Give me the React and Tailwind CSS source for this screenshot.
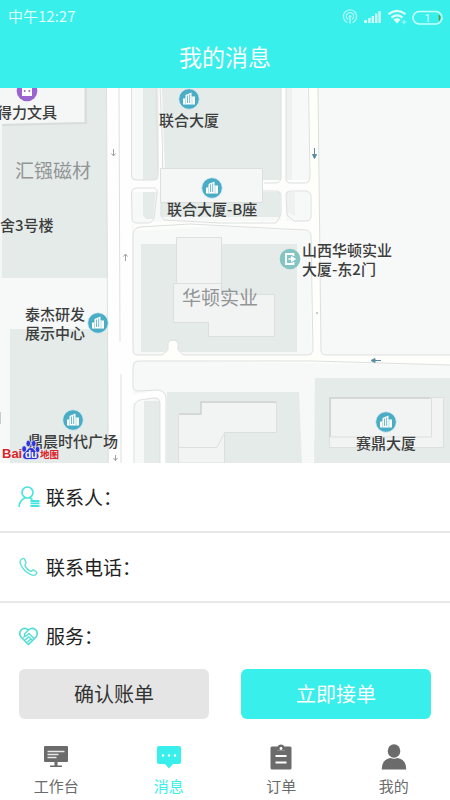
import React from "react";

const CYAN = "#38efeb";

function StatusIcons() {
  return (
    <svg width="102" height="18" viewBox="342 6 102 18" fill="none" aria-label="系统状态">
      <g stroke="#a9f8f5" strokeWidth="1.3" strokeLinecap="round">
        <path d="M347 21.300A6.600 6.600 0 1 1 353 21.300" />
        <path d="M347.800 18.200A3.700 3.700 0 1 1 352.200 18.200" />
        <path d="M350 17v5" strokeWidth="1.600" />
      </g>
      <circle cx="350" cy="15.500" r="1.500" fill="#a9f8f5" />
      <g fill="#d2fcfa">
        <rect x="364" y="19" width="3.200" height="3" rx="1" />
        <rect x="368.200" y="17" width="2.400" height="5" />
        <rect x="371.600" y="15" width="2.400" height="7" />
        <rect x="375" y="12.500" width="2.400" height="9.500" />
        <rect x="378.400" y="10" width="2.400" height="12" />
      </g>
      <g stroke="#e2fefc" strokeWidth="2.200">
        <path d="M388.500 13.200Q397 6.600 405.500 13.200" />
        <path d="M391.500 16.600Q397 12.200 402.500 16.600" />
      </g>
      <path d="M397 22.500l-3.600-4Q397 15.800 400.600 18.500z" fill="#e2fefc" />
      <path d="M401.500 21h5M404 18.700v4.600" stroke="#a5f8f5" strokeWidth="1.200" />
      <rect x="413" y="10.500" width="29" height="12.500" rx="6.200" stroke="#c9fffb" strokeWidth="1.600" />
      <path d="M439 14v5.500a4 4 0 0 0 0-5.500z" fill="#4a9c2c" stroke="#4a9c2c" strokeWidth="0.600" />
      <text x="427.500" y="20.500" fontSize="11" textAnchor="middle" fill="#dcfffd" fontFamily="Roboto, sans-serif">1</text>
    </svg>
  );
}

function MapDrawing() {
  return (
    <svg
      className="block h-full w-full"
      viewBox="0 88 450 375"
      preserveAspectRatio="xMidYMid slice"
      aria-hidden="true"
    >
      <rect x="0" y="88" width="450" height="375" fill="#f7f8f8" />

      {/* plots */}
      <g fill="#e5ebe9">
        <path d="M0 88H106L108 278H0z" />
        <path d="M10 329H108L109 463H10z" />
        <path d="M143 88H158L159 176L157 180H143z" />
        <path d="M162 88H281V182H165V170z" />
        <path d="M143 189H156L153 219H146L143 215z" />
        <path d="M161 192H280V217H161z" />
        <path d="M141 244H297V352H141z" />
        <path d="M144 401H160V463H144z" />
        <path d="M167 392H299L302 463H167z" />
        <path d="M315 378H450V463H314z" />
      </g>
      <path d="M286 88H292V183H286zM287 192H295V216L287 212z" fill="#eff1f1" />
      <path d="M0 88H84V122L2 124V278H0z" fill="#f5f6f6" />
      <path d="M2 125L86 123V88" fill="none" stroke="#d9dddc" strokeWidth="2" />

      {/* roads */}
      <path d="M107 88H131L134 463H109z" fill="#fefefe" />
      <path d="M308 88H318L321 355H312z" fill="#fefefb" />
      <path d="M132 355H450V365L132 361z" fill="#fefefb" />
      <path d="M131 180H310V192H131z" fill="#fcfdfc" />
      <path d="M133 223L165 221L311 221V232L220 226L134 231z" fill="#fdfdfc" />
      <path d="M160 88L163 170V182H157L159 168V88zM281 88H286V221H281z" fill="#fdfdfc" />
      <path d="M133 395L158 390Q165 391 166 399V463H160V400Q160 397 155 397L134 403z" fill="#fff" />
      <path d="M162 355L168 349V343Q173 337 178 343V349L183 355z" fill="#fefefb" />

      {/* kerbs */}
      <g fill="none" stroke="#dde0de" strokeWidth="1">
        <path d="M106.500 88L108 463M119 88L120 342M121 374V463" />
        <path d="M131.500 88V176Q132 180 136 180H154Q158 180 158 176L156 88" />
        <path d="M160 88L162.500 145V168" />
        <path d="M131.500 193Q132 188 137 188H154Q158 189 157 193L154 218Q153 223 147 223H137Q132 223 132 218z" />
        <path d="M281 88V178Q280 183 275 183H264M286 88V179Q286 183 291 183H306Q310 182 310 177L308.500 88" />
        <path d="M263 191H277Q281 192 281 195V214Q279 219 276 223H220L164 220L161 216V190" />
        <path d="M286 195Q286 191 290 191H306Q311 192 311 197V216Q311 221 306 221H294L287 215z" />
        <path d="M318 88L321 350Q321 355 326 355H450" />
        <path d="M133 350V236Q133 228 140 227L190 224L284 229L306 230Q311 231 311 237L313 351Q312 355 307 355H183L178 350V343Q177 340 173 340Q168 340 168 344V350L162 355H138Q133 355 133 350" />
        <path d="M133 386V368Q133 361 139 361H312L450 365" />
        <path d="M133 386Q133 391 138 391L158 390Q166 391 166 399V463M134 463V408Q134 402 140 400L153 398Q160 398 160 403V463" />
      </g>

      {/* buildings */}
      <g fill="#f2f4f4" stroke="#dbdfde" strokeWidth="1">
        <path d="M160.500 168.500H262.500V202.500H160.500z" fill="#f5f6f6" />
        <path d="M176.500 237.500H221.500V294.500H274.500V336.500H208.500V322.500H173.500V283.500H176.500z" />
        <path d="M176 283.500H221.500" fill="none" />
        <path d="M178.500 414.500H200.500V402.500H276.500V432.500H224.500V463H178.500z" />
        <path d="M178.500 447.500H217L224.500 433" fill="none" />
        <path d="M329.500 397.500H443.500V447.500H329.500z" />
        <path d="M330.500 398H431.500V437H330.500z" />
      </g>
      <path d="M179 414H201V402H276M330 437V398H430" fill="none" stroke="#cfd4d3" strokeWidth="1.500" />
      <path d="M0 412v12" stroke="#c8cccb" strokeWidth="2" />

      {/* traffic direction arrows */}
      <g fill="none" stroke="#9da2a5" strokeWidth="1">
        <path d="M113.500 149v7M111.500 153.500l2 2.500l2-2.500" />
        <path d="M125.500 261v-7M123.500 256.500l2-2.500l2 2.500" />
        <path d="M115.500 455v6M113.500 458l2 2.500l2-2.500" />
      </g>
      <g fill="#5b8ca8" stroke="#5b8ca8" strokeWidth="1">
        <path d="M314.500 148v7M312.500 154.500h4l-2 4z" />
        <path d="M381 360.500h-6M375 358.500v4l-4-2z" />
      </g>
      <circle cx="317" cy="313" r="1" fill="#b8bdbd" />
    </svg>
  );
}

function BuildingPin() {
  return (
    <svg className="block shrink-0" width="22" height="22" viewBox="0 0 22 22" aria-hidden="true">
      <circle cx="11" cy="11" r="10.300" fill="#4badc5" stroke="#d7eef3" strokeWidth="0.800" />
      <path d="M5 10.500h2.500V7L13.500 4.500V8.500H17V16.500H5z" fill="#fff" />
      <path d="M9.500 7.500v7.500M11.700 6.500v8.500" stroke="#6cbdd0" strokeWidth="1" />
      <path d="M14 9v7M7.500 11v5" stroke="#a6d8e2" strokeWidth="0.800" />
    </svg>
  );
}

function DoorPin() {
  return (
    <svg className="block shrink-0" width="22" height="22" viewBox="0 0 22 22" aria-hidden="true">
      <circle cx="11" cy="11" r="10.300" fill="#84c4c3" />
      <path d="M14.500 8V6H7v10h7.500v-2" fill="none" stroke="#fff" strokeWidth="1.800" />
      <path d="M9.500 11h3V8.500l4 2.500l-4 2.700V11z" fill="#fff" stroke="#fff" strokeWidth="1" />
    </svg>
  );
}

function ShopPin() {
  return (
    <svg className="block shrink-0" width="22" height="22" viewBox="0 0 22 22" aria-hidden="true">
      <circle cx="11" cy="11" r="10.300" fill="#9b63d0" />
      <path d="M6 8h10v8H6z" fill="#fff" />
      <circle cx="8.700" cy="11" r="1" fill="#9b63d0" />
      <circle cx="13.300" cy="11" r="1" fill="#9b63d0" />
    </svg>
  );
}

function BaiduLogo() {
  return (
    <svg className="block" width="60" height="24" viewBox="0 0 60 24" role="img" aria-label="Baidu 地图">
      <g stroke="#fff" strokeWidth="0.600" fill="#2f35d8">
        <ellipse cx="24.200" cy="10" rx="2.400" ry="3.200" />
        <ellipse cx="28.300" cy="4.500" rx="2.300" ry="3.200" />
        <ellipse cx="33.700" cy="4.500" rx="2.300" ry="3.200" />
        <ellipse cx="37.500" cy="10.500" rx="2.300" ry="3.200" />
        <path d="M30.800 8.500C27.500 8.500 27 12 24.500 13.500C21.500 16 22.500 20.500 26.500 20.500H35C39.500 20.500 40 16 37 13.500C34.500 11.500 34 8.500 30.800 8.500z" />
      </g>
      <g fontFamily="'Liberation Sans', sans-serif" fontWeight="700">
        <text x="2" y="19" fontSize="13" fill="#d9252b">Bai</text>
        <text x="25" y="19" fontSize="10" fill="#fff">du</text>
      </g>
      <text x="40" y="18.500" fontSize="9.500" fontWeight="700" fill="#d9252b" fontFamily="'Noto Sans CJK SC', sans-serif">地图</text>
    </svg>
  );
}

const marker = "absolute flex whitespace-nowrap text-[15px] leading-[19px] font-medium text-[#3c3d3d]";
const area = "absolute whitespace-nowrap text-[19px] leading-6 text-[#929596]";

function MapView() {
  return (
    <section aria-label="地图" className="relative h-[375px] w-full overflow-hidden">
      <MapDrawing />
      <span className={area + " left-[15px] top-[70px]"}>汇镪磁材</span>
      <span className={area + " left-[182px] top-[197px]"}>华顿实业</span>

      <div className={marker + " left-[-3px] top-[-8px] flex-col items-center"}>
        <ShopPin />
        得力文具
      </div>
      <div className={marker + " left-[159px] top-0 flex-col items-center"}>
        <BuildingPin />
        联合大厦
      </div>
      <div className={marker + " left-[167px] top-[89px] flex-col items-center"}>
        <BuildingPin />
        联合大厦-B座
      </div>
      <div className={marker + " left-0 top-[127px]"}>舍3号楼</div>
      <div className={marker + " left-[279px] top-[152px] items-center gap-px"}>
        <DoorPin />
        <span>山西华顿实业<br />大厦-东2门</span>
      </div>
      <div className={marker + " left-[25px] top-[216px] items-center gap-0.5"}>
        <span>泰杰研发<br />展示中心</span>
        <BuildingPin />
      </div>
      <div className={marker + " left-[28px] top-[321px] flex-col items-center"}>
        <BuildingPin />
        鼎晨时代广场
      </div>
      <div className={marker + " left-[356px] top-[323px] flex-col items-center"}>
        <BuildingPin />
        赛鼎大厦
      </div>
      <span className="absolute bottom-0 left-0"><BaiduLogo /></span>
    </section>
  );
}

function ContactIcon() {
  return (
    <svg width="22" height="22" viewBox="0 0 22 22" fill="none" stroke="#45e4de" strokeWidth="1.600" aria-hidden="true">
      <circle cx="9.500" cy="6.500" r="5.500" />
      <path d="M1 21C1.500 15.500 4 13.200 7 12M12 12l2.500 1.500" />
      <path d="M12.500 15h9M12.500 17.400h9M12.500 20h9" strokeWidth="1.900" />
    </svg>
  );
}

function PhoneIcon() {
  return (
    <svg width="22" height="22" viewBox="0 0 22 22" fill="none" stroke="#5ce0d8" strokeWidth="1.400" strokeLinejoin="round" aria-hidden="true">
      <path d="M2.500 4L5 2.500Q6 2.200 6.500 3L8 6.500Q8.200 7.500 7.300 8.200Q6.500 9 7.200 10.200Q9 13.500 12 15Q13.300 15.500 14 14.700Q14.800 13.700 15.800 14.200L18.500 16Q19.200 16.700 18.500 17.500L17.500 18.700Q16 20 13 18.700Q5.500 15.500 2.500 8Q1.700 5.500 2.500 4z" />
    </svg>
  );
}

function HeartIcon() {
  return (
    <svg width="22" height="22" viewBox="0 0 22 22" fill="none" stroke="#4fdcd5" strokeWidth="1.600" strokeLinejoin="round" aria-hidden="true">
      <path d="M10.500 19.500L3 12Q.5 8.500 3 5Q6.500 1.800 10.500 5Q14.500 1.800 18 5Q20.500 8.500 18 12z" />
      <path d="M10.500 5L6.500 9Q6 11 8 11L11 8.500L16 13.500M5 12.500l3-2M7 15l4-3.500M9.500 17l3.500-3M11 12l3 3" strokeWidth="1.300" />
    </svg>
  );
}

function InfoRow({ icon, children }) {
  return (
    <div className="flex h-[70px] items-center gap-1.5 border-b-2 border-[#e7e8e8] px-[18px] text-[19px] leading-7 text-[#222]">
      {icon}
      <span>{children}</span>
    </div>
  );
}

function DeskIcon() {
  return (
    <svg width="26" height="26" viewBox="0 0 26 26" aria-hidden="true">
      <path d="M2 2h22q1 0 1 1v14q0 1-1 1h-9.500v3.500H19V23H7v-1.500h4.500V18H2q-1 0-1-1V3q0-1 1-1z" fill="#6b6b6b" />
      <path d="M4.500 7.500h17M4.500 10.500h11M4.500 13.500h9" stroke="#e8e8e8" strokeWidth="1.400" />
    </svg>
  );
}

function MessageIcon() {
  return (
    <svg width="26" height="26" viewBox="0 0 26 26" aria-hidden="true">
      <path d="M3 2h20q2 0 2 2v14q0 2-2 2h-6L13 24.500L9 20H3q-2 0-2-2V4q0-2 2-2z" fill={CYAN} />
      <g fill="#fff">
        <circle cx="7" cy="11.500" r="1.200" />
        <circle cx="13" cy="11.500" r="1.200" />
        <circle cx="19" cy="11.500" r="1.200" />
      </g>
    </svg>
  );
}

function OrderIcon() {
  return (
    <svg width="26" height="26" viewBox="0 0 26 26" aria-hidden="true">
      <path d="M4 2.500h5.500Q10.500.5 13 .5T16.500 2.500H22q1.500 0 1.500 1.500v20q0 1.500-1.500 1.500H4Q2.500 25.500 2.500 24V4Q2.500 2.500 4 2.500z" fill="#6b6b6b" />
      <path d="M7.500 12h11M7.500 18.500h11" stroke="#fff" strokeWidth="2" />
      <path d="M9 6.500h8" stroke="#8d8d8d" strokeWidth="1" />
      <circle cx="13" cy="4.500" r="1.400" fill="#fff" />
    </svg>
  );
}

function UserIcon() {
  return (
    <svg width="26" height="26" viewBox="0 0 26 26" fill="#6b6b6b" aria-hidden="true">
      <ellipse cx="13" cy="7" rx="6.300" ry="6.700" />
      <path d="M.7 25.500Q.7 15.500 9.500 14q3.500 1.600 7 0Q25.300 15.500 25.300 25.500z" />
    </svg>
  );
}

function Tab({ icon, label, active }) {
  return (
    <button
      type="button"
      aria-current={active ? "page" : undefined}
      className={
        "flex flex-1 flex-col items-center gap-1.5 text-[15px] leading-5 " +
        (active ? "text-[#38efeb]" : "text-[#6b6b6b]")
      }
    >
      {icon}
      {label}
    </button>
  );
}

export default function App() {
  return (
    <div className="flex min-h-screen w-full flex-col bg-white font-['Noto_Sans_CJK_SC',sans-serif]">
      <header className="h-[88px] bg-[#38efeb] text-white">
        <div className="flex h-8 items-center justify-between pr-1.5 pl-2 text-[15px] leading-5 text-[#dcfffd]">
          <span>中午12:27</span>
          <StatusIcons />
        </div>
        <h1 className="pt-2 text-center text-[23px] leading-8">我的消息</h1>
      </header>

      <main>
        <MapView />
        <InfoRow icon={<ContactIcon />}>联系人：</InfoRow>
        <InfoRow icon={<PhoneIcon />}>联系电话：</InfoRow>
        <div className="flex h-[66px] items-center gap-1.5 px-[18px] text-[19px] leading-7 text-[#222]">
          <HeartIcon />
          <span>服务：</span>
        </div>
        <div className="flex gap-8 px-[19px]">
          <button type="button" className="h-[50px] flex-1 rounded-md bg-[#e5e5e5] text-xl text-[#333]">
            确认账单
          </button>
          <button type="button" className="h-[50px] flex-1 rounded-md bg-[#38efeb] text-xl text-white">
            立即接单
          </button>
        </div>
      </main>

      <nav aria-label="主导航" className="flex pt-[25px]">
        <Tab icon={<DeskIcon />} label="工作台" />
        <Tab icon={<MessageIcon />} label="消息" active />
        <Tab icon={<OrderIcon />} label="订单" />
        <Tab icon={<UserIcon />} label="我的" />
      </nav>
    </div>
  );
}
